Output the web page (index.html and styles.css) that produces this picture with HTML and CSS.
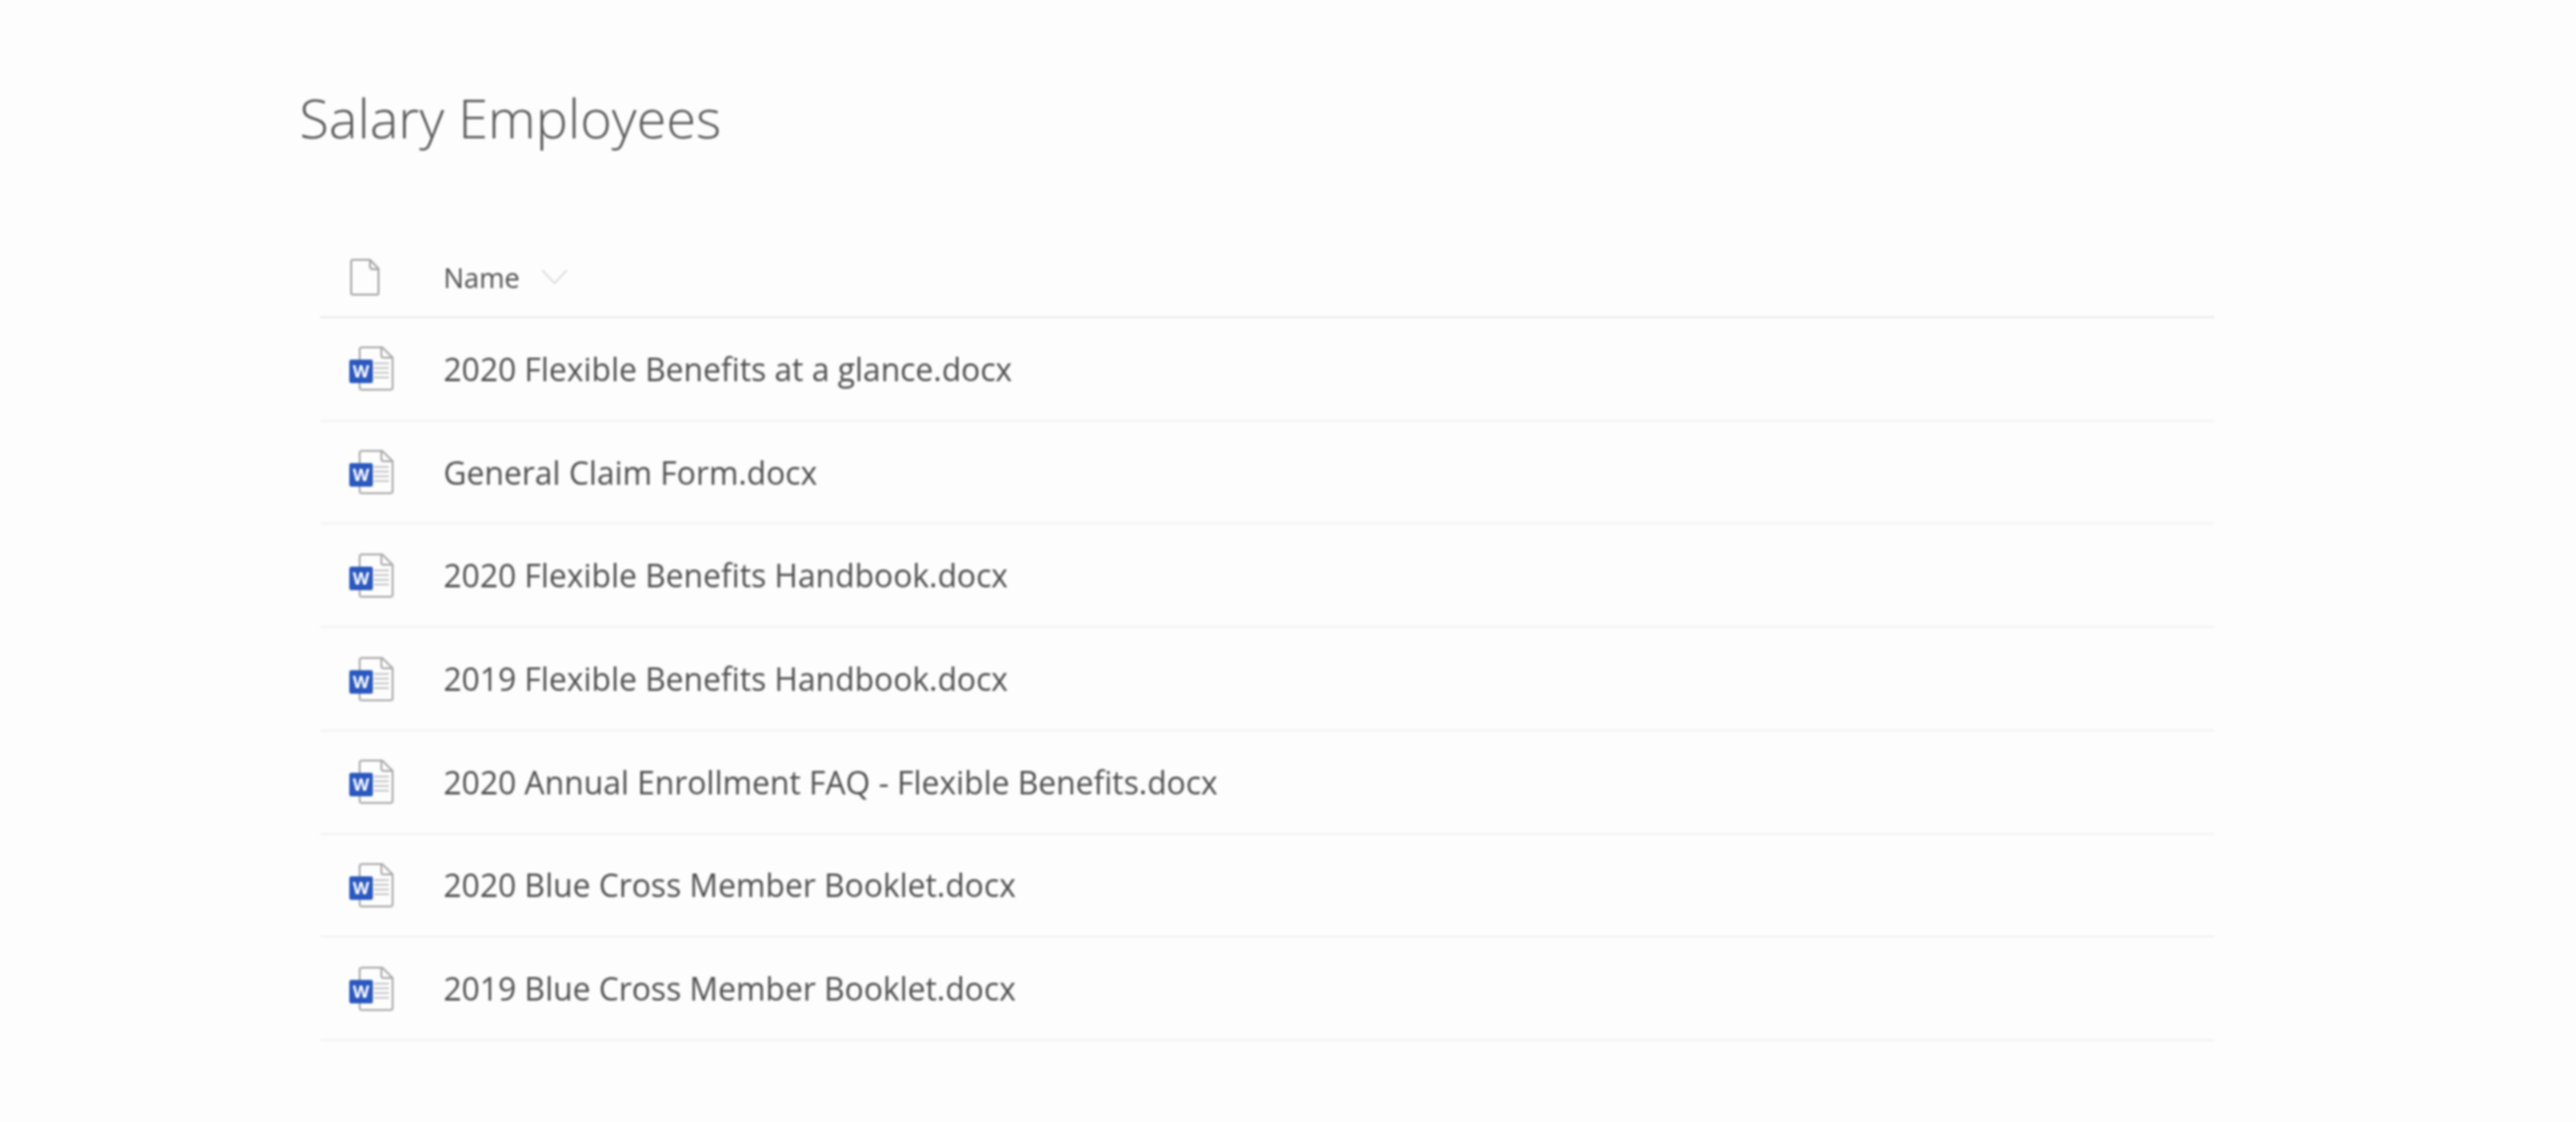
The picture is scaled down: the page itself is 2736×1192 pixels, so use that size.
FILE: index.html
```html
<!DOCTYPE html>
<html lang="en">
  <head>
    <meta charset="UTF-8" />
    <title>Salary Employees</title>
    <link rel="stylesheet" href="styles.css">
  </head>
  <body>
    <svg class="defs" width="0" height="0">
      <symbol id="word-page" viewBox="0 0 47 47">
        <path d="M11 3.500a2.500 2.500 0 0 1 2.500-2.500h21.500l11 11v31.500a2.500 2.500 0 0 1-2.500 2.500h-30a2.500 2.500 0 0 1-2.500-2.500z" fill="#fdfdfd" stroke="#aaa" stroke-width="2"/>
        <path d="M34 1.500v8a2.500 2.500 0 0 0 2.500 2.500h9" fill="none" stroke="#aaa" stroke-width="2"/>
        <path d="M26 18h16M26 23h16M26 28h16M26 33h16" stroke="#c8c8c8" stroke-width="2"/>
      </symbol>
    </svg>

    <div class="page">
      <h1>Salary Employees</h1>

      <div class="list">
        <div class="list-head">
          <div class="icon-col">
            <svg class="head-icon" viewBox="0 0 33 41">
              <path d="M2 4a2 2 0 0 1 2-2h18l9 9.500V37a2 2 0 0 1-2 2H4a2 2 0 0 1-2-2z" fill="none" stroke="#a4a4a4" stroke-width="2"/>
              <path d="M22 2v7a3 3 0 0 0 3 3h6" fill="none" stroke="#a4a4a4" stroke-width="2"/>
            </svg>
          </div>
          <span class="head-name">Name</span>
          <svg class="chevron" viewBox="0 0 28 17">
            <path d="M1 1l13 14L27 1" fill="none" stroke="#d4d4d4" stroke-width="1.500"/>
          </svg>
        </div>

        <div class="row">
          <div class="icon-col"><div class="doc-icon"><svg class="doc-page"><use href="#word-page"/></svg><span class="word-badge">W</span></div></div>
          <span class="file-name">2020 Flexible Benefits at a glance.docx</span>
        </div>
        <div class="row">
          <div class="icon-col"><div class="doc-icon"><svg class="doc-page"><use href="#word-page"/></svg><span class="word-badge">W</span></div></div>
          <span class="file-name">General Claim Form.docx</span>
        </div>
        <div class="row">
          <div class="icon-col"><div class="doc-icon"><svg class="doc-page"><use href="#word-page"/></svg><span class="word-badge">W</span></div></div>
          <span class="file-name">2020 Flexible Benefits Handbook.docx</span>
        </div>
        <div class="row">
          <div class="icon-col"><div class="doc-icon"><svg class="doc-page"><use href="#word-page"/></svg><span class="word-badge">W</span></div></div>
          <span class="file-name">2019 Flexible Benefits Handbook.docx</span>
        </div>
        <div class="row">
          <div class="icon-col"><div class="doc-icon"><svg class="doc-page"><use href="#word-page"/></svg><span class="word-badge">W</span></div></div>
          <span class="file-name">2020 Annual Enrollment FAQ - Flexible Benefits.docx</span>
        </div>
        <div class="row">
          <div class="icon-col"><div class="doc-icon"><svg class="doc-page"><use href="#word-page"/></svg><span class="word-badge">W</span></div></div>
          <span class="file-name">2020 Blue Cross Member Booklet.docx</span>
        </div>
        <div class="row">
          <div class="icon-col"><div class="doc-icon"><svg class="doc-page"><use href="#word-page"/></svg><span class="word-badge">W</span></div></div>
          <span class="file-name">2019 Blue Cross Member Booklet.docx</span>
        </div>
      </div>
    </div>
  </body>
</html>
```

FILE: styles.css
```css
html,
body {
  margin: 0;
  background: #fdfdfd;
}
body {
  font-family: "Open Sans", "Liberation Sans", sans-serif;
  color: #4f4f4f;
}
.defs {
  display: block;
}
.page {
  height: 1192px;
  padding: 0 384px 0 318px;
  box-sizing: border-box;
  filter: blur(0.8px);
}
h1 {
  margin: 0;
  padding-top: 85px;
  height: 149px;
  font-size: 57.4px;
  line-height: 80px;
  font-weight: 300;
  color: #565656;
  box-sizing: content-box;
}
.list {
  margin-left: 22px;
}
.list-head {
  display: flex;
  align-items: center;
  height: 83px;
  padding-top: 19px;
  border-bottom: 2px solid #ebebeb;
  box-sizing: content-box;
}
.icon-col {
  width: 131px;
  padding-left: 31px;
  box-sizing: border-box;
  display: flex;
  align-items: center;
}
.head-icon {
  width: 33px;
  height: 41px;
}
.head-name {
  font-size: 29px;
  color: #4f4f4f;
}
.chevron {
  width: 28px;
  height: 17px;
  margin-left: 23px;
}
.row {
  display: flex;
  align-items: center;
  height: 109.72px;
  box-sizing: border-box;
  border-bottom: 2px solid #f4f4f4;
}
.doc-icon {
  position: relative;
  width: 47px;
  height: 47px;
}
.doc-page {
  display: block;
  width: 47px;
  height: 47px;
}
.word-badge {
  position: absolute;
  left: 0;
  top: 14px;
  width: 25px;
  height: 25px;
  border-radius: 2px;
  background: #2b58c0;
  color: #fff;
  font-size: 18px;
  font-weight: 700;
  line-height: 25px;
  text-align: center;
}
.file-name {
  font-size: 33.8px;
  color: #4f4f4f;
}
```
